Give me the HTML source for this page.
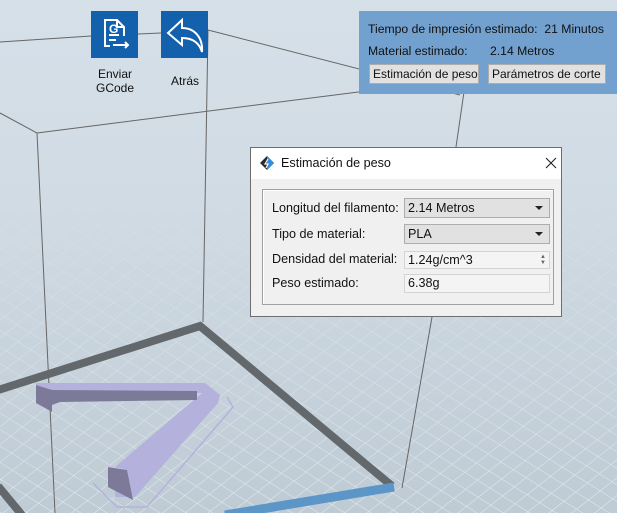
<!DOCTYPE html>
<html><head><meta charset="utf-8"><style>
*{margin:0;padding:0;box-sizing:border-box}
body{width:617px;height:513px;overflow:hidden;position:relative;font-family:"Liberation Sans","DejaVu Sans",sans-serif;font-size:12px;color:#111;background:#d3dde6}
.abs{position:absolute}
.panel{left:359px;top:11px;width:258px;height:83px;background:#72a1cf}
.pt{position:absolute;white-space:nowrap;font-size:12.2px}
.btn{position:absolute;top:53px;height:20px;background:#e1e1e1;border:1px solid #adadad;font-size:12px;line-height:18px;padding-left:3px;white-space:nowrap}
.dlg{left:250px;top:147px;width:312px;height:170px;background:#f0f0f0;border:1px solid #6e6e6e}
.tb{height:31px;background:#fff;position:relative}
.grp{position:absolute;left:11px;top:41px;width:292px;height:116px;border:1px solid #a0a0a0;box-shadow:inset 1px 1px 0 #fff}
.lbl{position:absolute;left:9px;font-size:12.6px;white-space:nowrap}
.fld{position:absolute;left:141px;width:146px;height:20px;border:1px solid #adadad;font-size:12.6px;line-height:18px;padding-left:3px}
.cb{background:#e1e1e1}
.cb:after{content:"";position:absolute;right:6px;top:7px;border-left:4px solid transparent;border-right:4px solid transparent;border-top:4px solid #222}
.ed{background:#f4f4f4;border-color:#d4d4d4}
</style></head><body>
<svg class="abs" style="left:0;top:0" width="617" height="513">
<defs>
<linearGradient id="bg" x1="0" y1="0" x2="0" y2="1"><stop offset="0" stop-color="#d6e0e9"/><stop offset="0.4" stop-color="#d0dbe4"/><stop offset="1" stop-color="#bfcbd4"/></linearGradient>
<pattern id="g1" width="14" height="14" patternUnits="userSpaceOnUse" patternTransform="rotate(32)"><path d="M0 0H14" stroke="#e6edf2" stroke-width="1"/></pattern>
<pattern id="g2" width="14" height="14" patternUnits="userSpaceOnUse" patternTransform="rotate(-38)"><path d="M0 0H14" stroke="#e6edf2" stroke-width="1"/></pattern>
<linearGradient id="fade" x1="0" y1="0" x2="0" y2="1"><stop offset="0" stop-color="#fff" stop-opacity="0"/><stop offset="1" stop-color="#fff" stop-opacity="1"/></linearGradient>
<mask id="m"><rect x="0" y="140" width="617" height="373" fill="url(#fade)"/></mask>
</defs>
<rect width="617" height="513" fill="url(#bg)"/>
<g mask="url(#m)"><rect width="617" height="513" fill="url(#g1)"/><rect width="617" height="513" fill="url(#g2)"/></g>
<g stroke="#666" stroke-width="1" fill="none">
<path d="M0 42L91 36M138 34L161 33M208 30L460 95"/>
<path d="M37 133L413 85"/>
<path d="M0 113L37 133L55 513"/>
<path d="M208 30L203 322"/>
<path d="M465 85L456 147M432 317L402 488"/>
</g>
<path d="M-5 391L200 326L392 486" fill="none" stroke="#62686c" stroke-width="8"/>
<path d="M-2 486L22 515" fill="none" stroke="#62686c" stroke-width="8"/>
<path d="M394 487L225 515" fill="none" stroke="#5c95c8" stroke-width="9"/>
<g>
<path d="M227 397L233 407L147 507L117 507L93 483" fill="none" stroke="#b4b2dc" stroke-width="1.5"/>
<path d="M36 383L205 383L220 395L218 403L135 497L115 497L115 467L202 393L52 390L52 412L36 400Z" fill="#b4b2dc"/>
<path d="M36 385L52 390L52 412L36 403Z" fill="#7c7a98"/>
<path d="M52 390L197 391L197 400L60 402L52 405Z" fill="#7c7a98"/>
<path d="M108 467L127 470L133 500L108 487Z" fill="#7c7a98"/>
<path d="M108 465L115 467L127 470L108 467Z" fill="#c6c4e6"/>
</g>
<rect x="91" y="11" width="47" height="47" fill="#1360ad"/>
<rect x="161" y="11" width="47" height="47" fill="#1360ad"/>
<g fill="none" stroke="#fff" stroke-width="2">
<path d="M110 46H105V20H117L124 27V36"/>
<path d="M117 20V27H124"/>
<path d="M109 35H119M109 40H116M113 45H128M125 42L128 45L125 48"/>
<path d="M182 20L168 33L182 45V38C192 38 199 42 202 52C203 38 195 28 182 28Z"/>
</g>
<text x="109" y="33" fill="#fff" font-family="Liberation Sans" font-weight="bold" font-size="12">G</text>
</svg>
<div class="abs" style="left:86px;top:67px;width:58px;text-align:center;font-size:12px;line-height:14px">Enviar<br>GCode</div>
<div class="abs" style="left:163px;top:74px;width:44px;text-align:center;font-size:12px">Atrás</div>
<div class="abs panel">
<div class="pt" style="left:9px;top:11px">Tiempo de impresión estimado:&nbsp; 21 Minutos</div>
<div class="pt" style="left:9px;top:33px">Material estimado:</div>
<div class="pt" style="left:131px;top:33px">2.14 Metros</div>
<div class="btn" style="left:10px;width:110px">Estimación de peso</div>
<div class="btn" style="left:129px;width:118px">Parámetros de corte</div>
</div>
<div class="abs dlg">
<div class="tb">
<svg class="abs" style="left:8px;top:7px" width="16" height="16"><path d="M8 1L15 8L8 15L1 8Z" fill="#2a2a2a"/><path d="M8 1L15 8L8 15Z" fill="#2f8ee0"/><path d="M9 4L6 9H9L7 13" stroke="#fff" fill="none" stroke-width="1.2"/></svg>
<div class="abs" style="left:30px;top:8px;font-size:12.6px">Estimación de peso</div>
<svg class="abs" style="left:294px;top:9px" width="12" height="12"><path d="M1 1L11 11M11 1L1 11" stroke="#222" stroke-width="1.1"/></svg>
</div>
<div class="grp">
<div class="lbl" style="top:11px">Longitud del filamento:</div>
<div class="fld cb" style="top:8px">2.14 Metros</div>
<div class="lbl" style="top:37px">Tipo de material:</div>
<div class="fld cb" style="top:34px">PLA</div>
<div class="lbl" style="top:62px">Densidad del material:</div>
<div class="fld ed" style="top:61px;height:18px;line-height:16px">1.24g/cm^3<span style="position:absolute;right:3px;top:2px;font-size:6px;line-height:6px;color:#666">▲<br>▼</span></div>
<div class="lbl" style="top:86px">Peso estimado:</div>
<div class="fld ed" style="top:84px;height:19px;line-height:17px">6.38g</div>
</div>
</div>
</body></html>
